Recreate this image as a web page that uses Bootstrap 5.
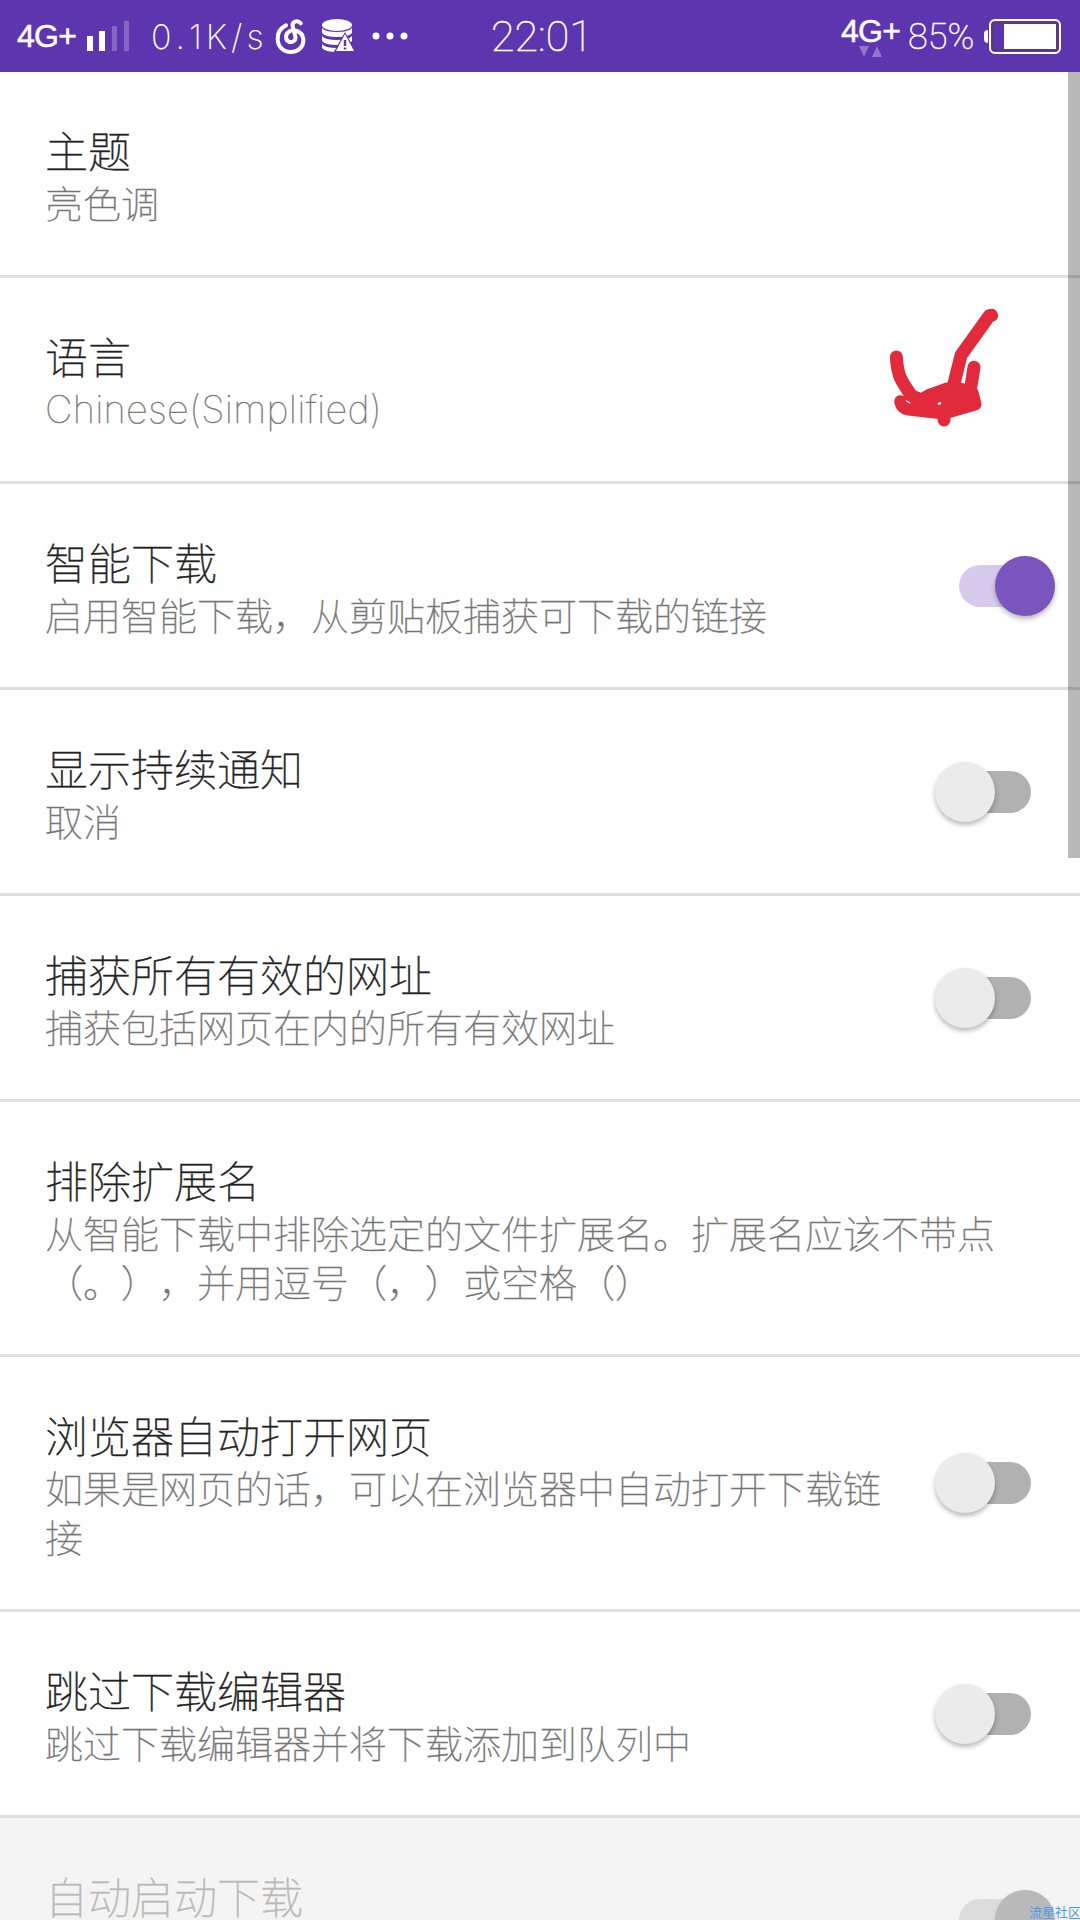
<!DOCTYPE html>
<html lang="zh-CN">
<head>
<meta charset="utf-8">
<meta name="viewport" content="width=device-width, initial-scale=1">
<title>设置</title>
<link href="https://cdn.jsdelivr.net/npm/bootstrap@5.3.0/dist/css/bootstrap.min.css" rel="stylesheet">
<script src="https://cdn.jsdelivr.net/npm/bootstrap@5.3.0/dist/js/bootstrap.bundle.min.js"></script>
<style>
body{width:1080px;height:1920px;overflow:hidden;background:#fff;font-family:"Noto Sans CJK SC","Noto Sans",sans-serif;font-kerning:none;text-spacing-trim:space-all}
.status{height:72px;background:#5d35ae;color:#fff;line-height:40px;white-space:nowrap}
.status svg{flex:none;display:block}
.net{font-family:"Liberation Sans",sans-serif;font-size:32px;letter-spacing:-.7px;-webkit-text-stroke:.5px #fff}
.net-left{width:71px;padding-left:17px}
.net-right{width:67px;margin-left:254px}
.net-right .net{height:28px;line-height:28px;margin-top:1px}
.speed{font-family:Inter,sans-serif;font-weight:200;font-size:34px;width:124px;margin-left:22px;letter-spacing:4px;padding-top:2px}
.clock{font-family:Roboto,sans-serif;font-weight:100;font-size:43px;width:96px;margin-left:82px;-webkit-text-stroke:.5px #fff}
.pct{font-family:Roboto,sans-serif;font-weight:100;font-size:36px;width:76px;padding-top:2px;-webkit-text-stroke:.5px #fff}
.pref{height:206px;padding:0 0 0 45px;border-bottom:3px solid #dfdfdf;background:#fff}
.pref.tall{height:255px}
.pref-copy{width:960px;padding-top:50px}
.has-toggle .pref-copy{width:850px}
.pref-title{font-size:43px;line-height:55px;font-weight:100;color:#212121;-webkit-text-stroke:.5px #212121}
.pref-sub{font-size:38px;line-height:49px;font-weight:100;color:#757575;-webkit-text-stroke:.4px #757575}
.latin{font-family:Inter,sans-serif;letter-spacing:.25px;padding-top:2px}
.pref-toggle{width:120px;height:60px;margin:0 25px 0 auto;padding:9px 24px}
.toggle-track{height:42px;border-radius:21px;background:#b1b1b1}
.toggle-knob{width:60px;height:60px;top:0;left:0;border-radius:50%;background:#ebebeb;box-shadow:0 3px 5px rgba(0,0,0,.28)}
.is-on .toggle-track{background:#d7cbed}
.is-on .toggle-knob{left:60px;background:#7a55bd}
.list-window{height:1848px;overflow:hidden}
.off-limits{background:#f4f4f4;border-color:#f4f4f4}
.off-limits .pref-title{color:#b9b9b9;-webkit-text-stroke-color:#b9b9b9}
.off-limits .toggle-track{background:#dcdcdc}
.off-limits .toggle-knob{background:#b9b9b9;box-shadow:0 2px 5px rgba(0,0,0,.12)}
.scroll-thumb{top:72px;right:0;width:12px;height:786px;background:rgba(0,0,0,.28)}
.ink{left:860px;top:290px}
.stamp{right:-1px;top:1904px;font-size:13px;line-height:16px;color:#4a9be6}
.ico-music{margin-left:-1px}
.ico-data{margin-left:12px}
.ico-more{margin-left:15px}
</style>
</head>
<body class="position-relative">
<header class="status d-flex align-items-center">
  <span class="net net-left">4G+</span>
  <svg class="ms-3" width="42" height="30" viewBox="0 0 42 30" fill="#fff"><path d="M0 15h6v15H0zM12 10h6v20h-6z"/><path opacity=".25" d="M25 5h5v25h-5zM37 0h5v30h-5z"/></svg>
  <span class="speed">0.1K/s</span>
  <svg class="ico-music" width="36" height="36" viewBox="0 0 108 108" fill="none" stroke="#fff" stroke-width="12" stroke-linecap="round"><path d="M80 16C70 4 53 12 56 25L64 55C67 70 54 73 47 72C33 68 33 49 44 42C54 33 84 36 88 63C90 87 72 102 50 102C27 102 11 85 11 62C11 43 19 30 36 22"/></svg>
  <svg class="ico-data" width="34" height="36" viewBox="0 0 34 36"><g fill="#fff"><ellipse cx="15" cy="7" rx="15" ry="6"/><path d="M0 10q3 4 15 4t15-4v5q-3 4-15 4T0 15z"/><path d="M0 18q3 4 15 4t15-4v5q-3 4-15 4T0 23z"/><path d="M0 26q3 4 15 4t15-4v4q-3 4-15 4T0 30z"/></g><path d="M23 16 33 34H13z" fill="#fff" stroke="#5d35ae" stroke-width="2"/><path d="M23 16 32 33H14z" fill="#fff"/><path d="M23 22v6M23 29.500v2" stroke="#5d35ae" stroke-width="2.500"/></svg>
  <svg class="ico-more" width="38" height="8" viewBox="0 0 38 8" fill="#fff"><circle cx="5" cy="4" r="3.500"/><circle cx="19" cy="4" r="3.500"/><circle cx="33" cy="4" r="3.500"/></svg>
  <span class="clock">22:01</span>
  <div class="net-right d-flex flex-column"><span class="net">4G+</span>
    <svg class="ms-3" width="30" height="12" viewBox="0 0 30 12" fill="#9075cc"><path d="M2 1h10L7 12zM15 12h10L20 1z"/></svg></div>
  <span class="pct">85%</span>
  <svg width="78" height="38" viewBox="0 0 78 38"><path d="M4 13v13Q0 26 0 22v-5Q0 13 4 13z" fill="#fff"/><rect x="6" y="3" width="70" height="33" rx="5" fill="none" stroke="#fff" stroke-width="2"/><path d="M9 6h64v27H9z" fill="none" stroke="#513e78" stroke-width="2"/><path d="M20 7h52v25H20z" fill="#fff"/></svg>
</header>
<main class="list-window">
  <section class="pref"><div class="pref-copy"><div class="pref-title">主题</div><div class="pref-sub">亮色调</div></div></section>
  <section class="pref"><div class="pref-copy"><div class="pref-title">语言</div><div class="pref-sub latin">Chinese(Simplified)</div></div></section>
  <section class="pref has-toggle d-flex"><div class="pref-copy"><div class="pref-title">智能下载</div><div class="pref-sub">启用智能下载，从剪贴板捕获可下载的链接</div></div><div class="pref-toggle is-on position-relative align-self-center"><div class="toggle-track"></div><div class="toggle-knob position-absolute"></div></div></section>
  <section class="pref has-toggle d-flex"><div class="pref-copy"><div class="pref-title">显示持续通知</div><div class="pref-sub">取消</div></div><div class="pref-toggle position-relative align-self-center"><div class="toggle-track"></div><div class="toggle-knob position-absolute"></div></div></section>
  <section class="pref has-toggle d-flex"><div class="pref-copy"><div class="pref-title">捕获所有有效的网址</div><div class="pref-sub">捕获包括网页在内的所有有效网址</div></div><div class="pref-toggle position-relative align-self-center"><div class="toggle-track"></div><div class="toggle-knob position-absolute"></div></div></section>
  <section class="pref tall"><div class="pref-copy"><div class="pref-title">排除扩展名</div><div class="pref-sub">从智能下载中排除选定的文件扩展名。扩展名应该不带点（。），并用逗号（，）或空格（）</div></div></section>
  <section class="pref tall has-toggle d-flex"><div class="pref-copy"><div class="pref-title">浏览器自动打开网页</div><div class="pref-sub">如果是网页的话，可以在浏览器中自动打开下载链接</div></div><div class="pref-toggle position-relative align-self-center"><div class="toggle-track"></div><div class="toggle-knob position-absolute"></div></div></section>
  <section class="pref has-toggle d-flex"><div class="pref-copy"><div class="pref-title">跳过下载编辑器</div><div class="pref-sub">跳过下载编辑器并将下载添加到队列中</div></div><div class="pref-toggle position-relative align-self-center"><div class="toggle-track"></div><div class="toggle-knob position-absolute"></div></div></section>
  <section class="pref off-limits has-toggle d-flex"><div class="pref-copy"><div class="pref-title">自动启动下载</div></div><div class="pref-toggle is-on position-relative align-self-center"><div class="toggle-track"></div><div class="toggle-knob position-absolute"></div></div></section>
</main>
<svg class="ink position-absolute" width="220" height="150" viewBox="0 0 660 450" fill="none" stroke="#e12a3c" stroke-linecap="round" stroke-linejoin="round"><path stroke-width="39" d="M109 201Q112 245 122 265T155 318L185 330M395 76 388 77 303 196 281 285M342 232 331 300M122 335Q126 354 145 357L252 369 345 342 336 308 302 298 262 297 208 316 176 335M252 375V390"/><path fill="#e12a3c" stroke="none" d="M140 330 190 316 280 290 340 310 340 345 250 380 140 360z"/><path fill="#fff" stroke="none" d="m138 330 14 8-2 3-12-7zM232 340l10-5 2 7-8 4z"/></svg>
<div class="scroll-thumb position-absolute"></div>
<div class="stamp position-absolute">流星社区</div>
</body>
</html>
